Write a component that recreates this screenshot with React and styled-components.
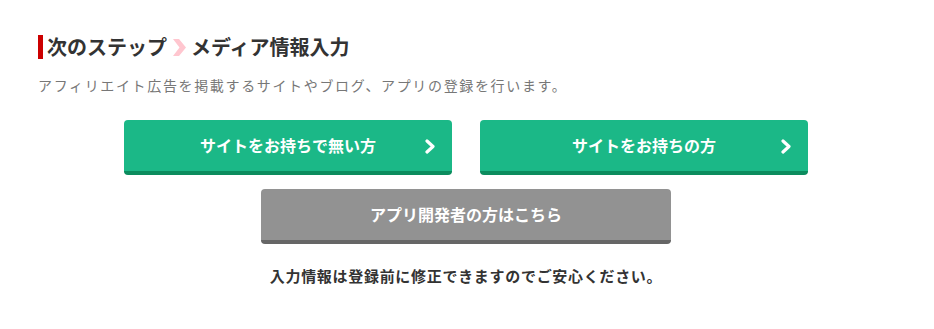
import React from 'react'
import styled, { createGlobalStyle } from 'styled-components'

const GlobalStyle = createGlobalStyle`
  body {
    margin: 0;
    background: #fff;
    font-family: "Noto Sans CJK JP", "Noto Sans", sans-serif;
  }
`

const Section = styled.section`
  width: 934px;
  padding: 35px 40px 0 38px;
  box-sizing: border-box;
`

const Heading = styled.h2`
  display: flex;
  align-items: center;
  margin: 0;
  height: 24px;
  padding-left: 4px;
  border-left: 5px solid #cc0000;
  font-size: 20px;
  font-weight: bold;
  line-height: 24px;
  color: #333;
`

const StepArrow = styled.svg`
  width: 13px;
  height: 17px;
  margin: 1px 5px 0 6px;
`

const Lead = styled.p`
  margin: 15px 0 0;
  font-size: 14px;
  line-height: 22px;
  letter-spacing: 1.65px;
  color: #777;
`

const Buttons = styled.div`
  display: flex;
  flex-direction: column;
  align-items: center;
  gap: 14px;
  margin-top: 24px;
`

const Row = styled.div`
  display: flex;
  gap: 28px;
`

const Button = styled.a`
  position: relative;
  display: flex;
  align-items: center;
  justify-content: center;
  box-sizing: border-box;
  width: ${p => p.$width}px;
  height: 55px;
  padding-bottom: 2px;
  border-radius: 4px;
  border-bottom: 4px solid ${p => (p.$gray ? '#666666' : '#0c8c5e')};
  background: ${p => (p.$gray ? '#929292' : '#1bb887')};
  color: #fff;
  font-size: 16px;
  font-weight: bold;
  text-decoration: none;
  cursor: pointer;
`

const Chevron = styled.svg`
  position: absolute;
  right: 16px;
  top: 50%;
  margin-top: -7px;
  width: 12px;
  height: 15px;
`

const Note = styled.p`
  margin: 21px 0 0;
  text-align: center;
  font-size: 15px;
  font-weight: bold;
  line-height: 22px;
  letter-spacing: 0.7px;
  color: #333;
`

const ButtonArrow = () => (
  <Chevron viewBox="0 0 12 15">
    <polyline points="3,2 9,7.5 3,13" fill="none" stroke="#fff" strokeWidth="3.2" strokeLinecap="round" strokeLinejoin="round" />
  </Chevron>
)

export default function App() {
  return (
    <>
      <GlobalStyle />
      <Section>
        <Heading>
          次のステップ
          <StepArrow viewBox="0 0 13 17">
            <polygon points="0,0 6,0 13,8.5 6,17 0,17 6.5,8.5" fill="#ffc6cf" />
          </StepArrow>
          メディア情報入力
        </Heading>
        <Lead>アフィリエイト広告を掲載するサイトやブログ、アプリの登録を行います。</Lead>
        <Buttons>
          <Row>
            <Button $width={328}>
              サイトをお持ちで無い方
              <ButtonArrow />
            </Button>
            <Button $width={328}>
              サイトをお持ちの方
              <ButtonArrow />
            </Button>
          </Row>
          <Button $width={410} $gray>アプリ開発者の方はこちら</Button>
        </Buttons>
        <Note>入力情報は登録前に修正できますのでご安心ください。</Note>
      </Section>
    </>
  )
}
